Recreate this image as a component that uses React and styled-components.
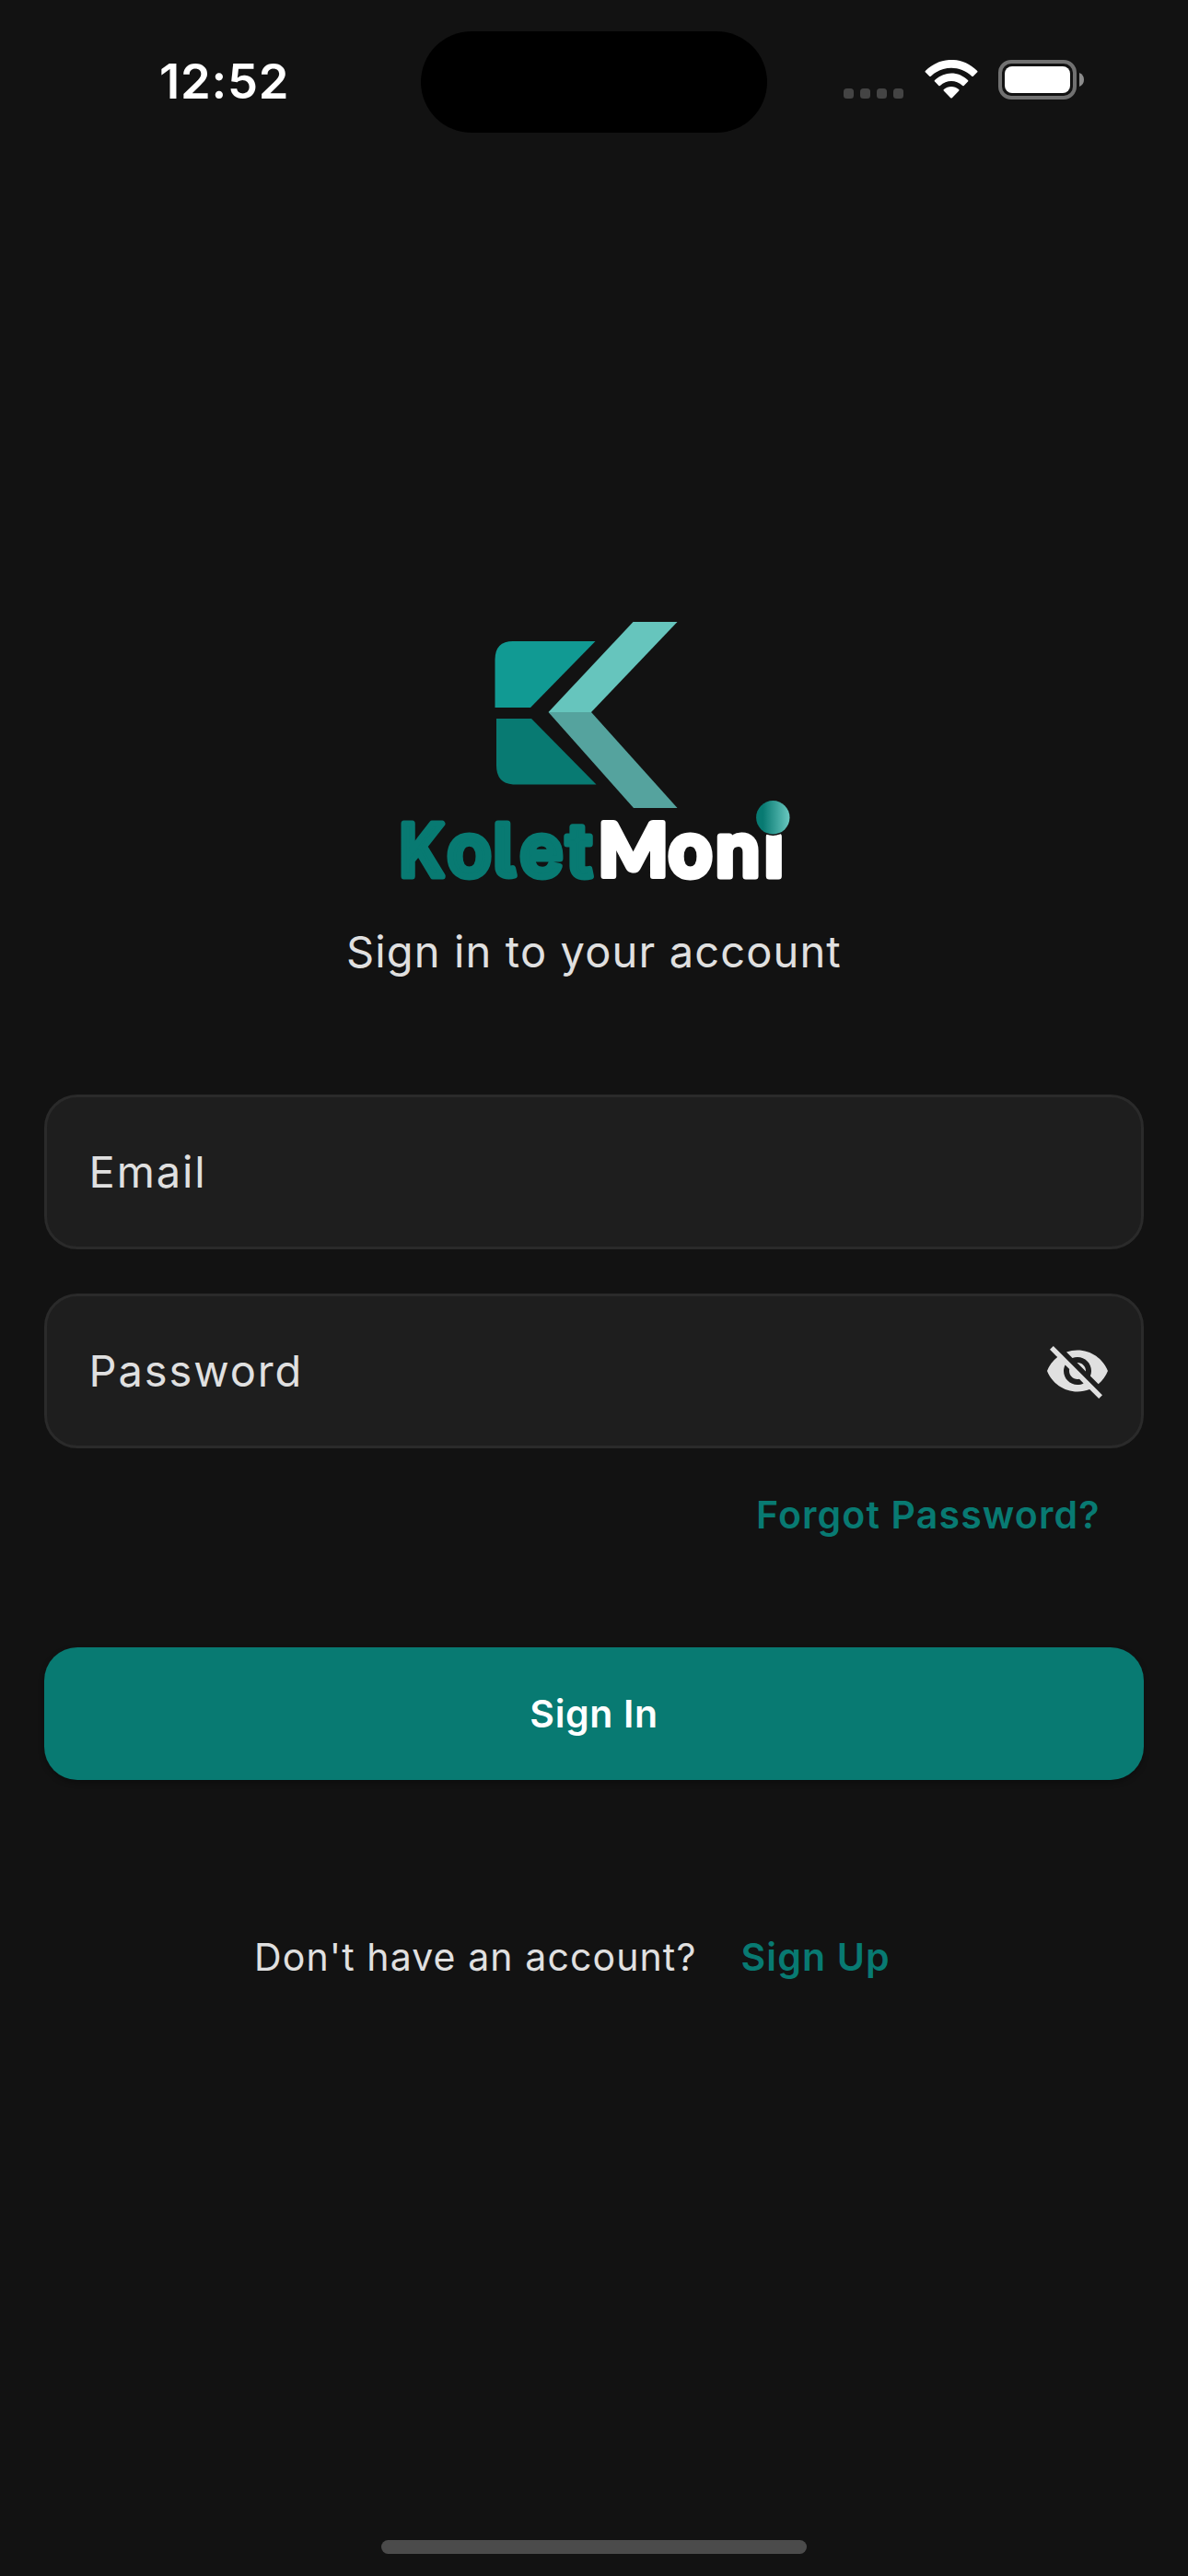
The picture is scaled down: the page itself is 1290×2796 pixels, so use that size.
import React from "react";
import styled, { createGlobalStyle } from "styled-components";
import { MdVisibilityOff } from "react-icons/md";

const GlobalStyle = createGlobalStyle`
  *, *::before, *::after { box-sizing: border-box; }
  body {
    margin: 0;
    background: #121212;
    font-family: Inter, "Liberation Sans", sans-serif;
    -webkit-font-smoothing: antialiased;
  }
`;

const Screen = styled.div`
  display: flex;
  flex-direction: column;
  width: 1290px;
  height: 2796px;
  background: #121212;
  overflow: hidden;
`;

const StatusBar = styled.header`
  display: grid;
  grid-template-columns: 457px 376px 457px;
  height: 178px;
`;

const Time = styled.div`
  padding: 58px 0 0 173px;
  line-height: 60px;
  font-size: 52.5px;
  font-weight: 600;
  letter-spacing: 0.8px;
  color: #fff;
`;

const Island = styled.div`
  margin-top: 34px;
  height: 110px;
  border-radius: 55px;
  background: #000;
`;

const StatusIcons = styled.div`
  display: flex;
  align-items: flex-start;
  padding: 65px 0 0 83px;
`;

const SignalDots = styled.div`
  display: flex;
  gap: 7px;
  margin: 31px 23px 0 0;
`;

const Dot = styled.span`
  width: 11px;
  height: 11px;
  border-radius: 3.5px;
  background: #444;
`;

const Battery = styled.div`
  display: flex;
  align-items: center;
  gap: 3px;
  margin-left: 22px;
`;

const BatteryCase = styled.div`
  width: 85px;
  height: 43px;
  padding: 3px;
  border: 4px solid #717171;
  border-radius: 14px;
`;

const BatteryCharge = styled.div`
  height: 100%;
  border-radius: 8px;
  background: #fff;
`;

const BatteryTip = styled.svg`
  width: 5px;
  height: 15px;
  display: block;
`;

const Main = styled.main`
  display: flex;
  flex-direction: column;
  padding: 482px 48px 0;
`;

const LogoArt = styled.svg`
  display: block;
  width: 450px;
  height: 330px;
  align-self: center;
`;

const WordmarkText = styled.text`
  font-family: Inter, "Liberation Sans", sans-serif;
  font-size: 79px;
  font-weight: 600;
  font-feature-settings: "cv05" 1;
  fill: ${(p) => p.$tone};
  stroke: ${(p) => p.$tone};
  stroke-width: 7px;
  stroke-linejoin: round;
`;

const SplayedLetter = styled.tspan`
  font-family: Lato, Inter, sans-serif;
  font-size: 80px;
  font-weight: 900;
  stroke-width: 6px;
`;

const Subtitle = styled.p`
  margin: 7px 0 0;
  padding-left: 328px;
  line-height: 72px;
  font-size: 47px;
  letter-spacing: 1.14px;
  white-space: nowrap;
  color: #e0e0e0;
`;

const Fields = styled.div`
  display: flex;
  flex-direction: column;
  gap: 48px;
  margin-top: 119px;
`;

const Field = styled.div`
  display: flex;
  align-items: center;
  justify-content: space-between;
  height: 168px;
  padding: 0 33px 0 45.5px;
  border: 3px solid #2a2a2a;
  border-radius: 36px;
  background: #1e1e1e;
  font-size: 47px;
  line-height: 72px;
  letter-spacing: 1.9px;
  color: #e0e0e0;
`;

const TextLink = styled.a`
  line-height: 60px;
  font-size: 41px;
  font-weight: 600;
  letter-spacing: 1.15px;
  white-space: nowrap;
  color: #087a72;
`;

const ForgotRow = styled.div`
  display: flex;
  margin-top: 42px;
  padding-left: 773px;
`;

const PrimaryButton = styled.button`
  height: 144px;
  margin: 114px 0 0;
  padding: 0;
  border: 0;
  border-radius: 36px;
  background: #087a72;
  box-shadow: 0 3px 6px rgba(0, 0, 0, 0.3);
  font-family: inherit;
  font-size: 41px;
  font-weight: 600;
  line-height: 60px;
  letter-spacing: 0.63px;
  color: #fff;
`;

const SignUpRow = styled.div`
  display: flex;
  align-items: baseline;
  gap: 48px;
  margin-top: 162px;
  padding-left: 228px;
`;

const Prompt = styled.span`
  line-height: 60px;
  font-size: 41px;
  letter-spacing: 1.11px;
  white-space: nowrap;
  color: #e0e0e0;
`;

const HomeIndicator = styled.div`
  width: 462px;
  height: 15px;
  margin: auto auto 24px;
  border-radius: 8px;
  background: #4b4b4b;
`;

function WifiIcon() {
  return (
    <svg width="58" height="42" viewBox="0 0 58 42">
      <g fill="#fff">
        <path d="M1 13.6Q0 12.7 1 11.7C17-4 41-4 57 11.7Q58 12.7 57 13.6L52.8 17.7Q52 18.4 51.2 17.7C38.5 5.8 19.5 5.8 6.8 17.7Q6 18.4 5.2 17.7Z" />
        <path d="M11 23.6Q10.2 22.7 11 21.9C21.5 12 36.5 12 47 21.9Q47.8 22.7 47 23.6L42.7 27.9Q42 28.5 41.2 27.9C34 21.2 24 21.2 16.8 27.9Q16 28.5 15.3 27.9Z" />
        <path d="M20.7 33.5Q20 32.7 20.9 32C25.5 28 32.5 28 37.1 32Q38 32.7 37.3 33.5L29.8 41.2Q29 42 28.2 41.2Z" />
      </g>
    </svg>
  );
}

function Logo() {
  return (
    <LogoArt viewBox="0 0 450 330" role="img" aria-label="KoletMoni">
      <defs>
        <linearGradient id="dot" x1="0" x2="1">
          <stop offset="0.2" stopColor="#087a72" />
          <stop offset="1" stopColor="#6ac8c0" />
        </linearGradient>
      </defs>
      <path d="M137 36H226.5L156 108H117.5V56Q117.5 36 137 36Z" fill="#119a93" />
      <path d="M119 120H157L227.5 191.5H137Q119 190 119 171Z" fill="#087a72" />
      <path d="M267.5 15H315.5L222 113H175.5Z" fill="#66c5bd" />
      <path d="M175.5 113H222L315.5 217H268Z" fill="#55a39e" />
      <WordmarkText $tone="#087a72" y="291" x="13.5 65.5 115.5 144.5 195">
        <tspan textLength="49" lengthAdjust="spacingAndGlyphs">K</tspan>olet
      </WordmarkText>
      <WordmarkText $tone="#fff" y="291" x="229.5 305.5 357 410">
        <SplayedLetter>M</SplayedLetter>oni
      </WordmarkText>
      <circle cx="419.3" cy="227.3" r="19.6" fill="#121212" />
      <circle cx="419.3" cy="227.3" r="18.2" fill="url(#dot)" />
    </LogoArt>
  );
}

export default function App() {
  return (
    <Screen>
      <GlobalStyle />
      <StatusBar>
        <Time>12:52</Time>
        <Island />
        <StatusIcons>
          <SignalDots>
            <Dot />
            <Dot />
            <Dot />
            <Dot />
          </SignalDots>
          <WifiIcon />
          <Battery>
            <BatteryCase>
              <BatteryCharge />
            </BatteryCase>
            <BatteryTip viewBox="0 0 5 15">
              <path d="M0 0Q5 2 5 7.5Q5 13 0 15Z" fill="#8c8c8c" />
            </BatteryTip>
          </Battery>
        </StatusIcons>
      </StatusBar>
      <Main>
        <Logo />
        <Subtitle>Sign in to your account</Subtitle>
        <Fields>
          <Field>Email</Field>
          <Field>
            Password
            <MdVisibilityOff size={72} />
          </Field>
        </Fields>
        <ForgotRow>
          <TextLink>Forgot Password?</TextLink>
        </ForgotRow>
        <PrimaryButton>Sign In</PrimaryButton>
        <SignUpRow>
          <Prompt>Don't have an account?</Prompt>
          <TextLink>Sign Up</TextLink>
        </SignUpRow>
      </Main>
      <HomeIndicator />
    </Screen>
  );
}
